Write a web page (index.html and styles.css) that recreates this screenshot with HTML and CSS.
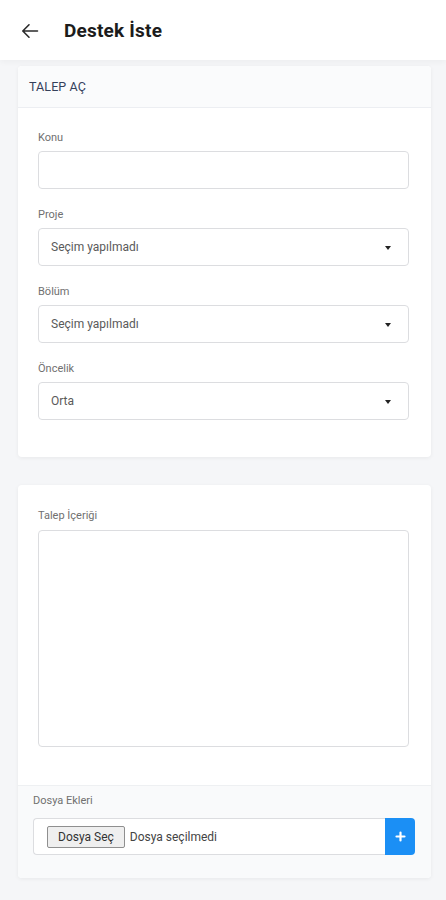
FILE: index.html
```html
<!DOCTYPE html>
<html lang="tr">
<head>
<meta charset="utf-8">
<title>Destek İste</title>
<link rel="stylesheet" href="styles.css">
</head>
<body>
<header class="topbar">
  <svg class="back" width="18" height="18" viewBox="0 0 18 18" aria-hidden="true">
    <path d="M16.5 9H2M8 2.8L1.8 9 8 15.2" fill="none" stroke="#2a2a2a" stroke-width="1.6" stroke-linecap="round" stroke-linejoin="round"/>
  </svg>
  <h1 class="title">Destek İste</h1>
</header>
<main class="page">
  <section class="card">
    <div class="card-head">TALEP AÇ</div>
    <div class="card-body">
      <div class="field">
        <div class="label">Konu</div>
        <div class="control"></div>
      </div>
      <div class="field">
        <div class="label">Proje</div>
        <div class="control select"><span>Seçim yapılmadı</span><i class="caret"></i></div>
      </div>
      <div class="field">
        <div class="label">Bölüm</div>
        <div class="control select"><span>Seçim yapılmadı</span><i class="caret"></i></div>
      </div>
      <div class="field">
        <div class="label">Öncelik</div>
        <div class="control select"><span>Orta</span><i class="caret"></i></div>
      </div>
    </div>
  </section>
  <section class="card card2">
    <div class="card-body body2">
      <div class="label">Talep İçeriği</div>
      <div class="textarea"></div>
    </div>
    <div class="card-foot">
      <div class="label">Dosya Ekleri</div>
      <div class="file-group">
        <div class="file-input"><span class="file-btn">Dosya Seç</span><span class="file-text">Dosya seçilmedi</span></div>
        <div class="add-btn">
          <svg width="11" height="11" viewBox="0 0 11 11" aria-hidden="true"><path d="M5.5 1.5v8M1.5 5.5h8" stroke="#fff" stroke-width="2.2" stroke-linecap="round"/></svg>
        </div>
      </div>
    </div>
  </section>
</main>
</body>
</html>
```
FILE: styles.css
```css
* { box-sizing: border-box; }
html, body { margin: 0; padding: 0; }
body {
  font-family: Roboto, "Liberation Sans", Arial, sans-serif;
  background: #f5f6f8;
  width: 446px;
  min-height: 900px;
}
.topbar {
  height: 60px;
  background: #fff;
  display: flex;
  align-items: center;
  padding-left: 21px;
  box-shadow: 0 2px 6px rgba(0,0,0,0.04);
  position: relative;
  z-index: 1;
}
.back { display: block; margin-top: 1px; }
.title {
  margin: 0 0 0 25px;
  font-size: 19px;
  font-weight: 700;
  color: #1c1c1c;
  letter-spacing: 0.2px;
}
.page {
  padding: 6px 15px 20px 18px;
}
.card {
  background: #fff;
  border-radius: 4px;
  box-shadow: 0 1px 4px rgba(0,0,0,0.06);
  overflow: hidden;
}
.card2 { margin-top: 28px; }
.card-head {
  height: 42px;
  display: flex;
  align-items: center;
  padding-left: 11px;
  background: #fafbfc;
  border-bottom: 1px solid #eceef2;
  font-size: 12.5px;
  color: #34405a;
  letter-spacing: 0.1px;
}
.card-body {
  padding: 22px 22px 19px 20px;
}
.field { margin-bottom: 18px; }
.label {
  font-size: 11px;
  line-height: 16px;
  color: #707070;
  margin-bottom: 5px;
}
.control {
  height: 38px;
  border: 1px solid #dcdde0;
  border-radius: 4px;
  background: #fff;
}
.select {
  display: flex;
  align-items: center;
  justify-content: space-between;
  padding: 0 17px 0 12px;
  font-size: 12px;
  color: #5a5a5a;
}
.caret {
  width: 0;
  height: 0;
  border-left: 3.5px solid transparent;
  border-right: 3.5px solid transparent;
  border-top: 4px solid #222;
  margin-top: 1px;
}
.body2 { padding: 23px 22px 38px 20px; }
.body2 .label { margin-bottom: 6px; }
.textarea {
  height: 217px;
  border: 1px solid #dcdde0;
  border-radius: 4px;
}
.card-foot {
  background: #f9fafb;
  border-top: 1px solid #eef0f2;
  padding: 7px 16px 23px 15px;
}
.card-foot .label { margin-bottom: 9px; }
.file-group {
  display: flex;
  height: 37px;
}
.file-input {
  flex: 1;
  display: flex;
  align-items: center;
  background: #fff;
  border: 1px solid #dcdde0;
  border-right: none;
  border-radius: 4px 0 0 4px;
  padding-left: 13px;
  font-size: 12px;
  color: #444;
}
.file-btn {
  display: inline-flex;
  align-items: center;
  height: 22px;
  padding: 0 10px;
  background: #efefef;
  border: 1px solid #8f8f8f;
  border-radius: 2px;
  color: #333;
  margin-right: 5px;
}
.file-text { color: #444; }
.add-btn {
  width: 30px;
  background: #1b8ff5;
  border-radius: 0 4px 4px 0;
  display: flex;
  align-items: center;
  justify-content: center;
}
.add-btn svg { display: block; }
```
